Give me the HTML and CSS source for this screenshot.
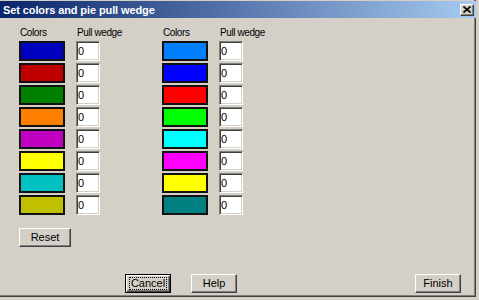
FILE: index.html
```html
<!DOCTYPE html>
<html lang="en">
<head>
    <meta charset="UTF-8">
    <title>Set colors and pie pull wedge</title>
    <link rel="stylesheet" href="styles.css">
</head>
<body>
    <div class="window">
        <div class="titlebar">
            <span class="title">Set colors and pie pull wedge</span>
            <button class="close-btn" aria-label="Close">
                <svg width="8" height="7" viewBox="0 0 8 7">
                    <path d="M0.5 0.5 L7.5 6.5 M7.5 0.5 L0.5 6.5" stroke="#000" stroke-width="1.6" fill="none"/>
                </svg>
            </button>
        </div>
        <div class="content">
            <div class="groups">
                <div class="group" id="leftGroup">
                    <div class="label">Colors</div>
                    <div class="label">Pull wedge</div>
                </div>
                <div class="group" id="rightGroup">
                    <div class="label">Colors</div>
                    <div class="label">Pull wedge</div>
                </div>
            </div>
            <button class="btn reset">Reset</button>
            <div class="actions">
                <button class="btn default"><span class="focus">Cancel</span></button>
                <button class="btn help">Help</button>
                <button class="btn finish">Finish</button>
            </div>
        </div>
    </div>

    <script>
        const leftColors = ['#0000c0', '#c00000', '#008000', '#ff8000', '#c000c0', '#ffff00', '#00c0c0', '#c0c000'];
        const rightColors = ['#0080ff', '#0000ff', '#ff0000', '#00ff00', '#00ffff', '#ff00ff', '#ffff00', '#008080'];

        // Build one swatch + pull wedge field per colour
        function fillGroup(group, colors) {
            colors.forEach(color => {
                const swatch = document.createElement('div');
                swatch.className = 'swatch';
                swatch.style.background = color;
                const input = document.createElement('input');
                input.className = 'wedge';
                input.value = '0';
                group.appendChild(swatch);
                group.appendChild(input);
            });
        }

        fillGroup(document.getElementById('leftGroup'), leftColors);
        fillGroup(document.getElementById('rightGroup'), rightColors);
    </script>
</body>
</html>
```

FILE: styles.css
```css
body {
    margin: 0;
    width: 479px;
    height: 300px;
    background-color: #d4d0c8;
    font-family: 'Liberation Sans', Arial, sans-serif;
    font-size: 11px;
    color: #000;
    overflow: hidden;
}
.window {
    box-sizing: border-box;
    width: 479px;
    height: 300px;
    padding-top: 1px;
    border-right: 3px solid #d4d0c8;
    border-bottom: 3px solid #d4d0c8;
    box-shadow: inset -1px -1px #404040, inset -2px -2px #808080;
    display: flex;
    flex-direction: column;
}
.titlebar {
    height: 17px;
    flex-shrink: 0;
    display: flex;
    align-items: center;
    justify-content: space-between;
    padding: 0 2px 0 3px;
    background: linear-gradient(to right, #0a246a, #a6caf0);
}
.title {
    color: #fff;
    font-weight: bold;
    font-size: 11px;
    letter-spacing: -0.1px;
}
.close-btn {
    width: 14px;
    height: 12px;
    padding: 0;
    margin: 0;
    display: flex;
    align-items: center;
    justify-content: center;
    background: #d4d0c8;
    border: 1px solid;
    border-color: #fff #404040 #404040 #fff;
    box-shadow: inset -1px -1px #808080;
}
.content {
    flex: 1;
    padding: 9px 15px 0 19px;
    display: flex;
    flex-direction: column;
    align-items: flex-start;
}
.groups {
    display: flex;
    gap: 62px;
}
.group {
    display: grid;
    grid-template-columns: 46px 24px;
    column-gap: 11px;
    row-gap: 2px;
}
.label {
    font-size: 10px;
    letter-spacing: -0.4px;
    line-height: 12px;
    padding-left: 1px;
    white-space: nowrap;
}
.swatch {
    box-sizing: border-box;
    height: 20px;
    border: 2px solid #111;
}
.wedge {
    box-sizing: border-box;
    width: 24px;
    height: 20px;
    margin: 0;
    padding: 0 0 0 1px;
    font-family: 'Liberation Sans', Arial, sans-serif;
    font-size: 11px;
    color: #000;
    background: #fff;
    border: 1px solid;
    border-color: #808080 #fff #fff #808080;
    box-shadow: inset 1px 1px #404040, inset -1px -1px #d4d0c8;
    outline: none;
}
.btn {
    box-sizing: border-box;
    height: 19px;
    margin: 0;
    padding: 0;
    font-family: 'Liberation Sans', Arial, sans-serif;
    font-size: 11px;
    line-height: 13px;
    color: #000;
    background: #d4d0c8;
    border: 1px solid;
    border-color: #fff #404040 #404040 #fff;
    box-shadow: inset -1px -1px #808080;
}
.reset {
    width: 52px;
    margin-top: 13px;
}
.actions {
    display: flex;
    width: 442px;
    margin-top: 27px;
}
.actions .btn {
    width: 46px;
}
.default {
    margin-left: 106px;
    border: 1px solid #000;
    box-shadow: inset 1px 1px #fff, inset -1px -1px #404040, inset -2px -2px #808080;
    padding: 2px 3px;
}
.focus {
    display: block;
    height: 13px;
    box-sizing: border-box;
    border: 1px dotted #000;
    line-height: 11px;
}
.help {
    margin-left: 20px;
}
.finish {
    margin-left: auto;
}
```
